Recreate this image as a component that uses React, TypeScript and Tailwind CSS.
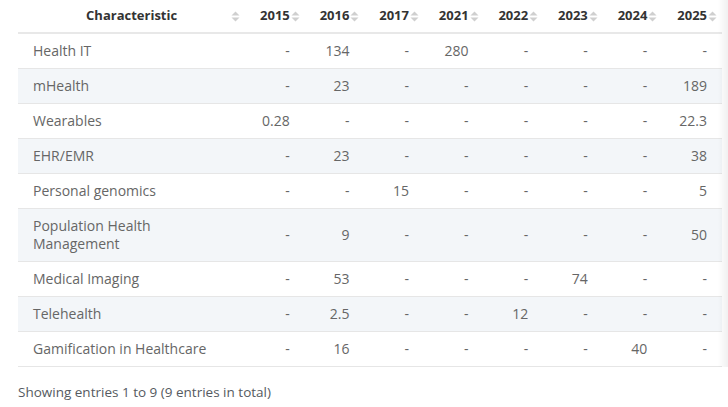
import React from "react";

const years = ["2015", "2016", "2017", "2021", "2022", "2023", "2024", "2025"];

const rows: [string, string[]][] = [
  ["Health IT", ["-", "134", "-", "280", "-", "-", "-", "-"]],
  ["mHealth", ["-", "23", "-", "-", "-", "-", "-", "189"]],
  ["Wearables", ["0.28", "-", "-", "-", "-", "-", "-", "22.3"]],
  ["EHR/EMR", ["-", "23", "-", "-", "-", "-", "-", "38"]],
  ["Personal genomics", ["-", "-", "15", "-", "-", "-", "-", "5"]],
  ["Population Health Management", ["-", "9", "-", "-", "-", "-", "-", "50"]],
  ["Medical Imaging", ["-", "53", "-", "-", "-", "74", "-", "-"]],
  ["Telehealth", ["-", "2.5", "-", "-", "12", "-", "-", "-"]],
  ["Gamification in Healthcare", ["-", "16", "-", "-", "-", "-", "40", "-"]],
];

function SortIcon() {
  return (
    <svg width="9" height="11" viewBox="0 0 9 11" className="absolute right-[5px] top-[11px]">
      <path d="M4.5 0.5 L8.5 4.5 L0.5 4.5 Z" fill="#cfcfcf" />
      <path d="M0.5 6.5 L8.5 6.5 L4.5 10.5 Z" fill="#cfcfcf" />
    </svg>
  );
}

export default function App() {
  return (
    <div
      className="relative w-[728px] h-[407px] bg-white overflow-hidden"
      style={{ fontFamily: '"Open Sans", "Liberation Sans", sans-serif' }}
    >
      <div className="pl-[18px] w-[722px]">
        <table className="table-fixed border-collapse w-[704px]">
          <colgroup>
            <col className="w-[227.2px]" />
            {years.map((y) => (
              <col key={y} className="w-[59.6px]" />
            ))}
          </colgroup>
          <thead>
            <tr className="border-b-2 border-[#e8e8e8]">
              <th className="relative h-[33px] p-0 text-center text-[13px] font-bold text-[#333333]">
                Characteristic
                <SortIcon />
              </th>
              {years.map((y) => (
                <th
                  key={y}
                  className="relative h-[33px] p-0 pr-[15px] text-right text-[13px] font-bold text-[#333333]"
                >
                  {y}
                  <SortIcon />
                </th>
              ))}
            </tr>
          </thead>
          <tbody>
            {rows.map(([label, vals], i) => (
              <tr
                key={label}
                className={`border-b border-[#e6e6e6] ${i % 2 === 1 ? "bg-[#f3f6f9]" : "bg-white"}`}
              >
                <td className="py-[8px] pl-[15px] pr-[20px] text-left text-[14px] leading-[18px] text-[#666666] align-middle">
                  {label}
                </td>
                {vals.map((v, j) => (
                  <td
                    key={j}
                    className="py-[8px] pr-[15px] text-right text-[14px] leading-[18px] text-[#666666] align-middle"
                  >
                    {v}
                  </td>
                ))}
              </tr>
            ))}
          </tbody>
        </table>
        <div className="mt-[15px] text-[13.5px] leading-[20px] text-[#555a61]">
          Showing entries 1 to 9 (9 entries in total)
        </div>
      </div>
      <div className="absolute right-0 top-0 h-[367px] w-[10px] bg-gradient-to-r from-[rgba(0,0,0,0)] to-[rgba(0,0,0,0.06)]" />
    </div>
  );
}
